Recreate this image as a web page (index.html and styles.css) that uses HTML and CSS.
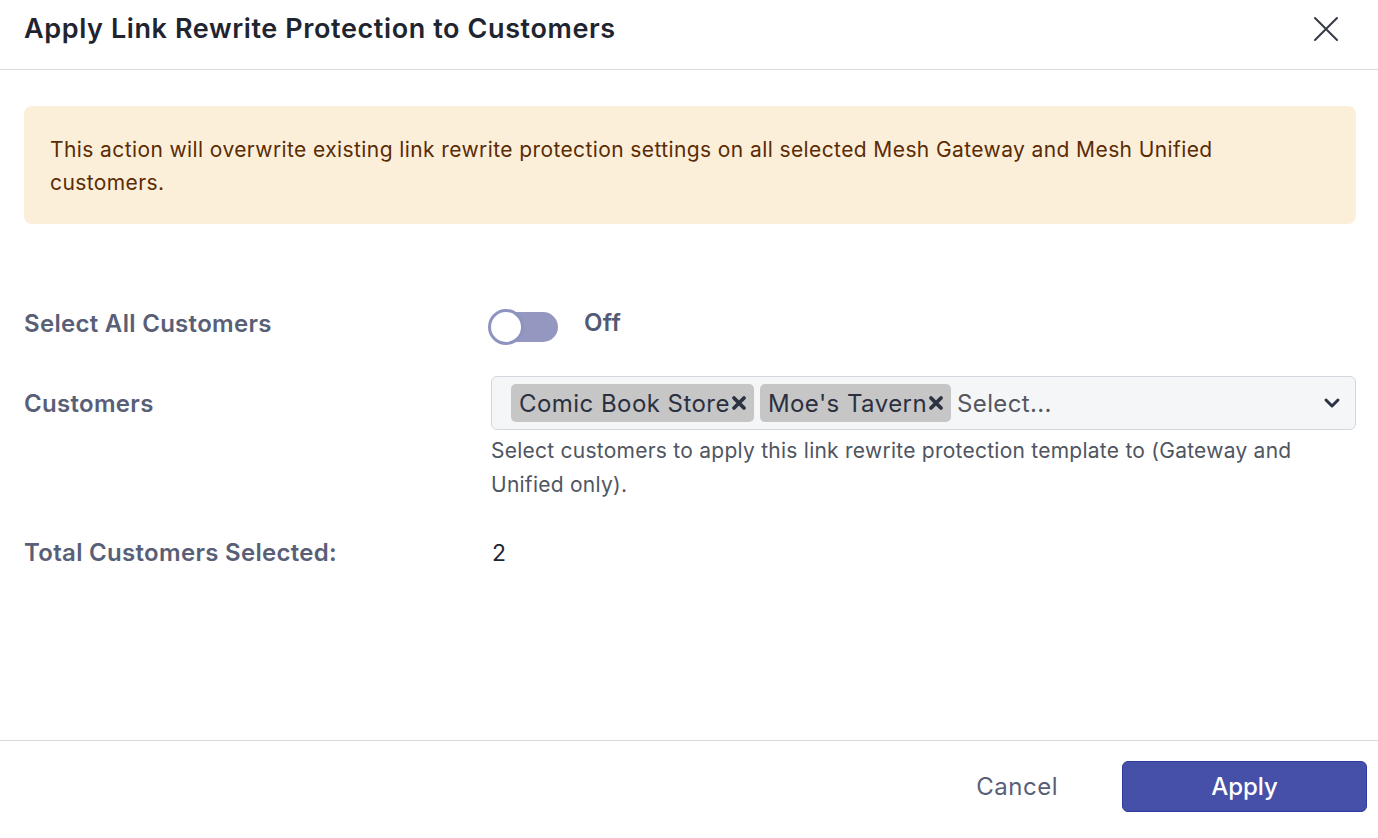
FILE: index.html
```html
<!DOCTYPE html>
<html lang="en">
<head>
<meta charset="utf-8">
<title>Apply Link Rewrite Protection to Customers</title>
<link rel="stylesheet" href="styles.css">
</head>
<body>
<div class="modal">
  <header class="modal-header">
    <h1 class="modal-title">Apply Link Rewrite Protection to Customers</h1>
    <button class="close-btn" aria-label="Close">
      <svg width="28" height="28" viewBox="0 0 28 28"><path d="M3 3 L25 25 M25 3 L3 25" stroke="#343a46" stroke-width="2" stroke-linecap="round" fill="none"/></svg>
    </button>
  </header>
  <main class="modal-body">
    <div class="alert">This action will overwrite existing link rewrite protection settings on all selected Mesh Gateway and Mesh Unified customers.</div>
    <div class="form">
      <div class="row row-toggle">
        <div class="label">Select All Customers</div>
        <div class="control toggle-wrap">
          <span class="toggle"><span class="knob"></span></span>
          <span class="toggle-text">Off</span>
        </div>
      </div>
      <div class="row row-select">
        <div class="label label-select">Customers</div>
        <div class="control">
          <div class="select">
            <div class="values">
              <span class="chip">Comic Book Store<svg class="chip-x" width="18" height="18" viewBox="0 0 18 18"><path d="M4 4 L14 14 M14 4 L4 14" stroke="#2c3242" stroke-width="3.8" stroke-linecap="round"/></svg></span>
              <span class="chip">Moe's Tavern<svg class="chip-x" width="18" height="18" viewBox="0 0 18 18"><path d="M4 4 L14 14 M14 4 L4 14" stroke="#2c3242" stroke-width="3.8" stroke-linecap="round"/></svg></span>
              <span class="placeholder">Select...</span>
            </div>
            <svg class="chevron" width="18" height="12" viewBox="0 0 18 12"><path d="M3 3 L9 9 L15 3" stroke="#2c3345" stroke-width="3" stroke-linecap="round" stroke-linejoin="round" fill="none"/></svg>
          </div>
          <p class="help">Select customers to apply this link rewrite protection template to (Gateway and Unified only).</p>
        </div>
      </div>
      <div class="row row-total">
        <div class="label">Total Customers Selected:</div>
        <div class="control total">2</div>
      </div>
    </div>
  </main>
  <footer class="modal-footer">
    <button class="btn-cancel">Cancel</button>
    <button class="btn-apply">Apply</button>
  </footer>
</div>
</body>
</html>
```

FILE: styles.css
```css
* { box-sizing: border-box; }
html, body { margin: 0; padding: 0; background: #fff; }
body {
  font-family: Inter, "Noto Sans", sans-serif;
  color: #1f2530;
  width: 1378px;
  height: 838px;
  overflow: hidden;
}
.modal {
  display: flex;
  flex-direction: column;
  height: 838px;
}
.modal-header {
  height: 70px;
  border-bottom: 1px solid #d7dae1;
  display: flex;
  align-items: center;
  justify-content: space-between;
  padding: 0 38px 0 24px;
}
.modal-title {
  margin: 0;
  font-size: 27px;
  font-weight: 600;
  letter-spacing: 0.6px;
  color: #1f2530;
  position: relative;
  top: -6px;
}
.close-btn {
  border: 0;
  background: transparent;
  padding: 0;
  width: 28px;
  height: 28px;
  display: flex;
  position: relative;
  top: -6px;
}
.modal-body {
  flex: 1;
  padding: 36px 22px 0 24px;
}
.alert {
  background: #fcefda;
  color: #5a2c05;
  border-radius: 8px;
  padding: 27px 26px 26px;
  font-size: 21px;
  letter-spacing: 0.4px;
  line-height: 33px;
  height: 118px;
}
.form {
  margin-top: 85px;
  display: flex;
  flex-direction: column;
}
.row {
  display: flex;
  align-items: flex-start;
}
.label {
  width: 467px;
  flex: none;
  font-size: 24px;
  letter-spacing: 0.3px;
  line-height: 30px;
  font-weight: 600;
  color: #595f77;
}
.control { flex: 1; }
.toggle-wrap {
  display: flex;
  align-items: center;
  gap: 26px;
  margin-left: -3px;
  margin-top: 0;
}
.toggle {
  width: 70px;
  height: 36px;
  display: flex;
  align-items: center;
  position: relative;
}
.toggle::before {
  content: "";
  width: 68px;
  height: 30px;
  margin-left: 2px;
  border-radius: 15px;
  background: #9498c0;
}
.knob {
  position: absolute;
  left: 0;
  top: 0;
  width: 36px;
  height: 36px;
  border-radius: 50%;
  background: #fff;
  border: 3px solid #8e93bf;
}
.toggle-text {
  font-size: 24px;
  letter-spacing: 0.3px;
  font-weight: 600;
  color: #535a73;
  position: relative;
  top: -5px;
}
.row-select { margin-top: 31px; }
.label-select { margin-top: 13px; }
.select {
  height: 54px;
  border: 1px solid #d3d6de;
  background: #f5f6f8;
  border-radius: 6px;
  display: flex;
  align-items: center;
  justify-content: space-between;
  padding: 0 14px 0 19px;
}
.values {
  display: flex;
  align-items: center;
  gap: 6px;
}
.chip {
  display: inline-flex;
  align-items: center;
  height: 38px;
  background: #c6c6c6;
  border-radius: 5px;
  padding: 0 6px 0 8px;
  font-size: 24px;
  letter-spacing: 0.45px;
  color: #2b3040;
}
.chip-x { margin-left: 0; }
.placeholder {
  font-size: 24px;
  letter-spacing: 0.35px;
  color: #55575e;
}
.chevron { display: block; }
.help {
  margin: 4px 0 0;
  font-size: 21px;
  letter-spacing: 0.25px;
  line-height: 34px;
  color: #50555f;
}
.row-total { margin-top: 36px; }
.total {
  font-size: 23px;
  line-height: 30px;
  color: #1f2530;
  padding-left: 1px;
}
.modal-footer {
  height: 98px;
  border-top: 1px solid #d7dae1;
  display: flex;
  align-items: center;
  justify-content: flex-end;
  padding: 0 11px 6px 0;
  gap: 64px;
}
.btn-cancel {
  border: 0;
  background: transparent;
  font-family: inherit;
  font-size: 24px;
  letter-spacing: 0.5px;
  color: #595f77;
  padding: 0;
}
.btn-apply {
  width: 245px;
  height: 51px;
  border-radius: 6px;
  background: #4650a8;
  border: 1px solid #2e3a9c;
  color: #fff;
  font-family: inherit;
  font-size: 24px;
  font-weight: 500;
}
```
